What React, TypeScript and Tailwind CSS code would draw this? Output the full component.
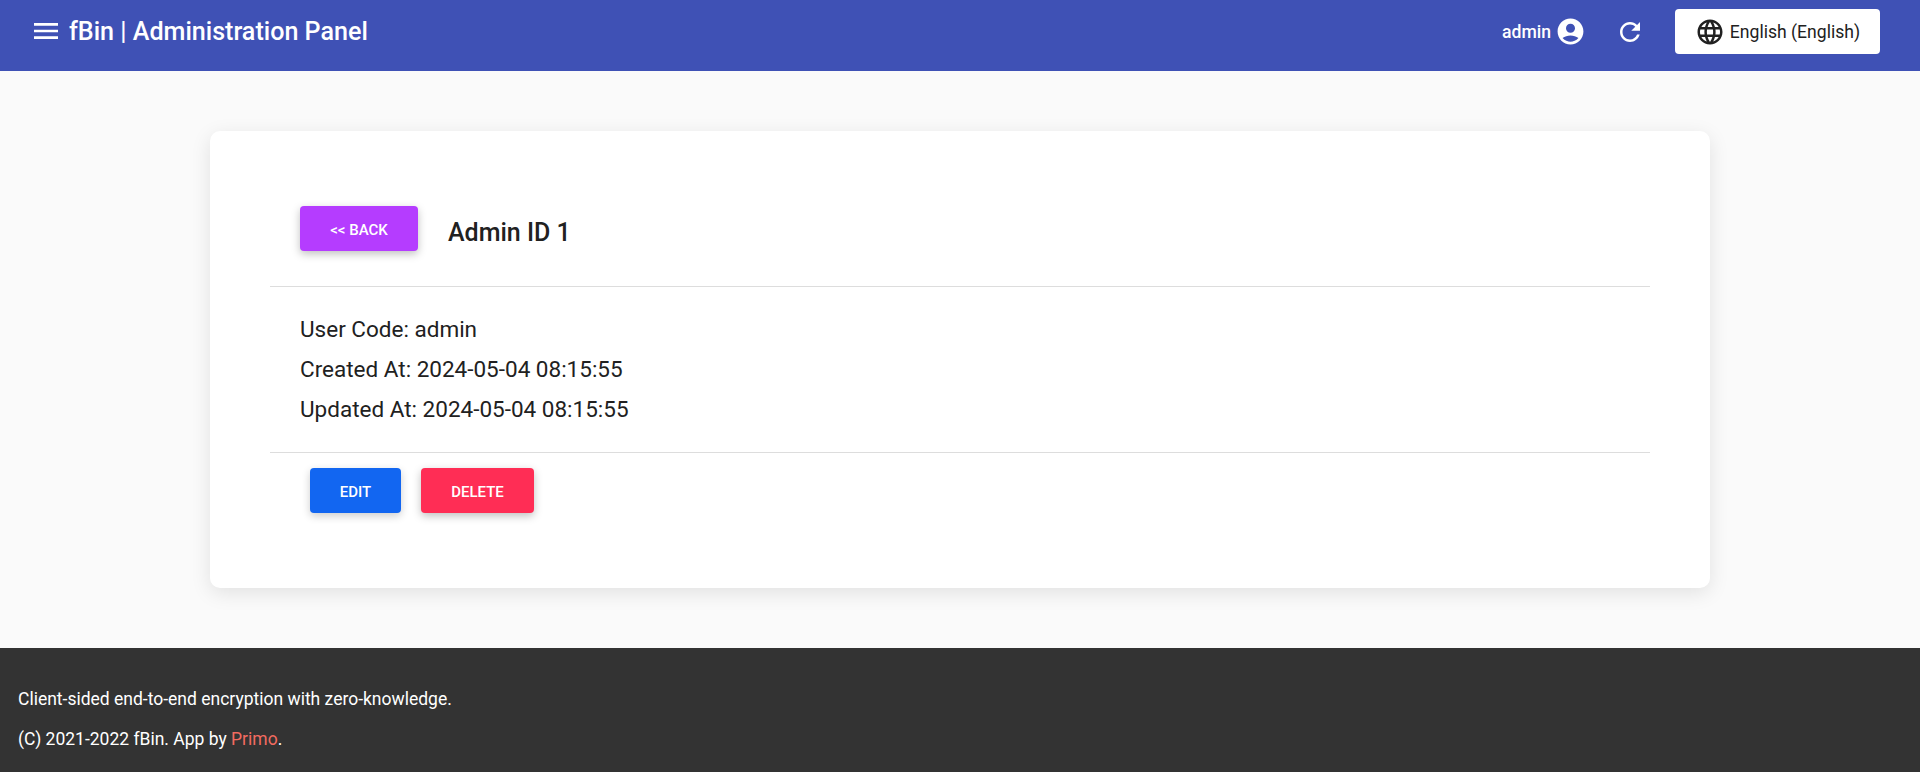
const ICONS = {
  menu: "M3 18h18v-2H3v2zm0-5h18v-2H3v2zm0-7v2h18V6H3z",
  account:
    "M12 2C6.48 2 2 6.48 2 12s4.48 10 10 10 10-4.48 10-10S17.52 2 12 2zm0 4c1.93 0 3.5 1.57 3.5 3.5S13.93 13 12 13s-3.5-1.57-3.5-3.5S10.07 6 12 6zm0 14c-2.03 0-4.43-.82-6.14-2.88C7.55 15.8 9.68 15 12 15s4.45.8 6.14 2.12C16.43 19.18 14.03 20 12 20z",
  refresh:
    "M17.65 6.35C16.2 4.9 14.21 4 12 4c-4.42 0-7.99 3.58-7.99 8s3.57 8 7.99 8c3.73 0 6.84-2.55 7.73-6h-2.08c-.82 2.33-3.04 4-5.65 4-3.31 0-6-2.69-6-6s2.69-6 6-6c1.66 0 3.14.69 4.22 1.78L13 11h7V4l-2.35 2.35z",
  language:
    "M11.99 2C6.47 2 2 6.48 2 12s4.47 10 9.99 10C17.52 22 22 17.52 22 12S17.52 2 11.99 2zm6.93 6h-2.95c-.32-1.25-.78-2.45-1.38-3.56 1.84.63 3.37 1.91 4.33 3.56zM12 4.04c.83 1.2 1.48 2.53 1.91 3.96h-3.82c.43-1.43 1.08-2.76 1.91-3.96zM4.26 14C4.1 13.36 4 12.69 4 12s.1-1.36.26-2h3.38c-.08.66-.14 1.32-.14 2 0 .68.06 1.34.14 2H4.26zm.82 2h2.95c.32 1.25.78 2.45 1.38 3.56-1.84-.63-3.37-1.9-4.33-3.56zm2.95-8H5.08c.96-1.66 2.49-2.93 4.33-3.56C8.81 5.55 8.35 6.75 8.03 8zM12 19.96c-.83-1.2-1.48-2.53-1.91-3.96h3.82c-.43 1.43-1.08 2.76-1.91 3.96zM14.34 14H9.66c-.09-.66-.16-1.32-.16-2 0-.68.07-1.35.16-2h4.68c.09.65.16 1.32.16 2 0 .68-.07 1.34-.16 2zm.25 5.56c.6-1.11 1.06-2.31 1.38-3.56h2.95c-.96 1.65-2.49 2.93-4.33 3.56zM16.36 14c.08-.66.14-1.32.14-2 0-.68-.06-1.34-.14-2h3.38c.16.64.26 1.31.26 2s-.1 1.36-.26 2h-3.38z",
};

const BUTTON_CLASS =
  "flex h-[45px] items-center justify-center rounded-[4px] pt-[4px] text-[15px] leading-none font-medium text-white uppercase";

function Icon({ d, className }: { d: string; className: string }) {
  return (
    <svg viewBox="0 0 24 24" fill="currentColor" className={className}>
      <path d={d} />
    </svg>
  );
}

export default function App() {
  return (
    <div className="flex min-h-screen flex-col bg-[#fafafa] font-['Roboto',sans-serif]">
      {/* Top bar */}
      <header className="flex h-[71px] items-center justify-between bg-[#3f51b5] pr-10 pb-[8px] pl-[30px] text-white">
        <div className="flex items-center gap-[7px]">
          <Icon d={ICONS.menu} className="size-[32px]" />
          <h1 className="text-[25.1px] font-medium">fBin | Administration Panel</h1>
        </div>
        <div className="flex items-center">
          <span className="pt-[2px] text-[17.6px] font-medium">admin</span>
          <Icon d={ICONS.account} className="ml-[4px] size-[31px]" />
          <Icon d={ICONS.refresh} className="ml-[29px] size-[30px]" />
          <button className="ml-[30px] flex h-[45px] w-[205px] items-center justify-center gap-[5px] rounded-[4px] bg-white text-[17.6px] text-[#212121]">
            <Icon d={ICONS.language} className="size-[30px]" />
            <span className="pt-[2px]">English (English)</span>
          </button>
        </div>
      </header>

      {/* Detail card */}
      <main className="flex-1 pt-[60px] pb-[60px]">
        <div className="mx-auto h-[457px] w-[1500px] rounded-[10px] bg-white px-[60px] pt-[75px] shadow-[0_5px_20px_rgba(0,0,0,0.1)]">
          <div className="flex items-center gap-[30px] px-[30px] pb-[35px]">
            <button className={`${BUTTON_CLASS} w-[118px] bg-[#b53cff] shadow-[0_3px_8px_rgba(0,0,0,0.25)]`}>
              &lt;&lt; Back
            </button>
            <h2 className="pt-[8px] text-[25px] leading-none font-medium text-[#212121]">Admin ID 1</h2>
          </div>
          <div className="border-t border-[#dddddd] px-[30px] pt-[22px] pb-[23px] text-[22.5px] leading-[40px] text-[#212121]">
            <p>User Code: admin</p>
            <p>Created At: 2024-05-04 08:15:55</p>
            <p>Updated At: 2024-05-04 08:15:55</p>
          </div>
          <div className="flex gap-5 border-t border-[#dddddd] pt-[15px] pl-10">
            <button className={`${BUTTON_CLASS} w-[91px] bg-[#1266f1] shadow-[0_3px_8px_rgba(0,0,0,0.2)]`}>
              Edit
            </button>
            <button className={`${BUTTON_CLASS} w-[113px] bg-[#ff2d55] shadow-[0_3px_8px_rgba(0,0,0,0.25)]`}>
              Delete
            </button>
          </div>
        </div>
      </main>

      {/* Footer */}
      <footer className="h-[124px] bg-[#333333] px-[18px] pt-[31px] text-[17.5px] leading-[40px] text-white">
        <p>Client-sided end-to-end encryption with zero-knowledge.</p>
        <p>
          (C) 2021-2022 fBin. App by <a className="text-[#f26b60]">Primo</a>.
        </p>
      </footer>
    </div>
  );
}
